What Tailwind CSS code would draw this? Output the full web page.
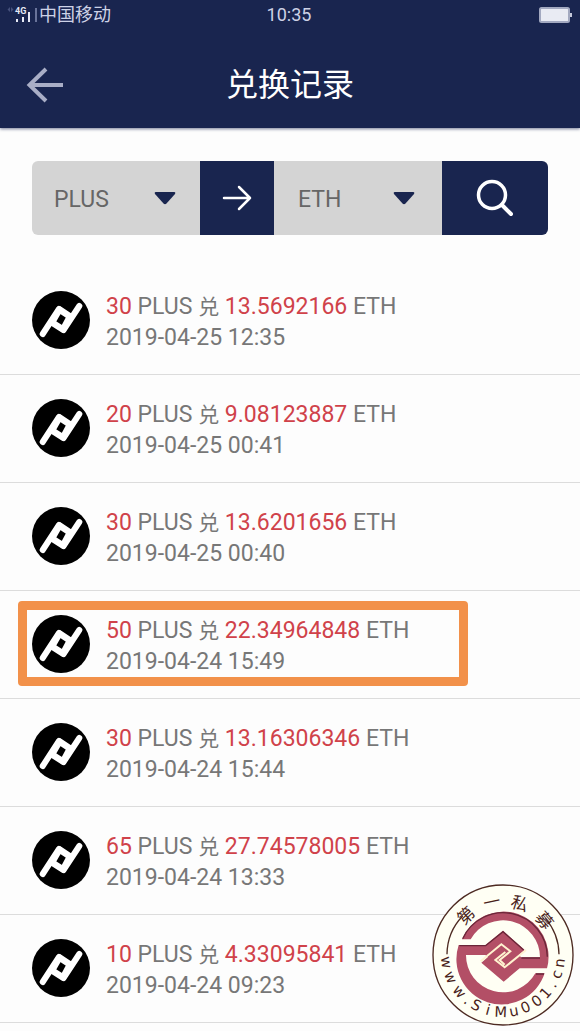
<!DOCTYPE html>
<html lang="zh-CN">
  <head>
    <meta charset="UTF-8" />
    <meta name="viewport" content="width=device-width, initial-scale=1.0" />
    <title>兑换记录</title>
    <script src="https://cdn.jsdelivr.net/npm/@tailwindcss/browser@4"></script>
  </head>
  <body class="bg-[#fdfdfd] font-[Roboto,'Noto_Sans_CJK_SC',sans-serif]">
    <!-- Icon PLUS, dipakai di setiap baris -->
    <svg class="hidden">
      <symbol id="plus" viewBox="0 0 58 58">
        <circle cx="29" cy="29" r="29" fill="#000" />
        <g fill="none" stroke="#fff" stroke-linecap="round" stroke-linejoin="round">
          <path d="M10.700 43L27 18M47.300 15L31.500 39" stroke-width="6" />
          <path d="M27.500 18.500L38 25.500L31 38.500L20 31.500Z" stroke-width="6.500" />
        </g>
      </symbol>
    </svg>

    <div class="relative min-h-screen">
      <header class="bg-[#19254f] shadow-[0_1px_3px_#19254f99]">
        <div class="grid grid-cols-3 items-center h-[30px] pl-[6px] pr-2 text-[18px] leading-[30px] text-[#cdd2e6]">
          <div class="flex items-center">
            <svg class="w-[32px] h-[20px]" viewBox="0 0 32 20" fill="#e6e9f5">
              <path d="M4 2L1.500 4.500L4 7ZM5 2L7.500 4.500L5 7Z" fill="#46517c" />
              <text x="9" y="9" font-size="9" font-weight="700" font-family="Roboto">4G</text>
              <path d="M10 14h2v3h-2zM16 12h2v5h-2zM22 7h2v10h-2z" />
              <path d="M29 3h2v14h-2z" fill="#69739a" />
            </svg>
            <span class="pl-px whitespace-nowrap">中国移动</span>
          </div>
          <div class="text-center">10:35</div>
          <svg class="justify-self-end w-[33px] h-[16px]" viewBox="0 0 33 16">
            <rect x="1" y="1" width="29" height="14" rx="1.500" fill="#e9ebf3" stroke="#a3a9c0" stroke-width="2" />
            <path d="M31 6h2v4h-2z" fill="#c3c8da" />
          </svg>
        </div>
        <div class="grid grid-cols-[72px_1fr_72px] items-center h-[98px] pt-3">
          <button type="button" aria-label="返回" class="pl-[26px]">
            <svg class="w-[38px] h-[36px]" viewBox="0 0 38 36" fill="none" stroke="#a9aec6" stroke-width="4">
              <path d="M20 2L3.500 18L20 34M4 18H37" />
            </svg>
          </button>
          <h1 class="text-[32px] leading-[48px] text-white text-center">兑换记录</h1>
        </div>
      </header>

      <form class="flex mx-8 mt-[33px] h-[74px] rounded-md overflow-hidden text-[23px] text-[#666]">
        <div class="relative flex-1 bg-[#d4d4d4]">
          <select aria-label="兑出币种" class="appearance-none w-full h-full pl-[22px] pt-1 outline-none">
            <option>PLUS</option>
            <option>ETH</option>
          </select>
          <svg class="absolute right-6 top-[31px] w-[22px] h-[13px] pointer-events-none" viewBox="0 0 22 13" fill="#19254f">
            <path d="M1.500 0H20.500Q22 .5 21 2L12.500 11.500Q11 13 9.500 11.500L1 2Q0 .5 1.500 0Z" />
          </svg>
        </div>
        <div class="flex items-center justify-center w-[74px] bg-[#19254f]">
          <svg class="w-[30px] h-[26px]" viewBox="0 0 30 26" fill="none" stroke="#fff" stroke-width="2.500" stroke-linecap="round" stroke-linejoin="round">
            <path d="M2 13H28M17 2L28 13L17 24" />
          </svg>
        </div>
        <div class="relative flex-1 bg-[#d4d4d4]">
          <select aria-label="兑入币种" class="appearance-none w-full h-full pl-6 pt-1 outline-none">
            <option>ETH</option>
            <option>PLUS</option>
          </select>
          <svg class="absolute right-[27px] top-[31px] w-[22px] h-[13px] pointer-events-none" viewBox="0 0 22 13" fill="#19254f">
            <path d="M1.500 0H20.500Q22 .5 21 2L12.500 11.500Q11 13 9.500 11.500L1 2Q0 .5 1.500 0Z" />
          </svg>
        </div>
        <button type="button" aria-label="搜索" class="flex items-center justify-center w-[106px] bg-[#19254f]">
          <svg class="w-[38px] h-[38px]" viewBox="0 0 38 38" fill="none" stroke="#fff" stroke-linecap="round">
            <circle cx="16" cy="16" r="13.500" stroke-width="3.500" />
            <path d="M26 26L35 35" stroke-width="4" />
          </svg>
        </button>
      </form>

      <ul class="mt-8 text-[23px] leading-[31px] text-[#777]">
        <li class="flex gap-4 pl-8 pt-6 pb-[21px] border-b border-[#dcdcdc]">
          <svg class="w-[58px] h-[58px]"><use href="#plus" /></svg>
          <div>
            <p><span class="text-[#d0424a]">30</span> PLUS <span class="text-[21px] leading-none">兑</span> <span class="text-[#d0424a]">13.5692166</span> ETH</p>
            <p>2019-04-25 12:35</p>
          </div>
        </li>
        <li class="flex gap-4 pl-8 pt-6 pb-[21px] border-b border-[#dcdcdc]">
          <svg class="w-[58px] h-[58px]"><use href="#plus" /></svg>
          <div>
            <p><span class="text-[#d0424a]">20</span> PLUS <span class="text-[21px] leading-none">兑</span> <span class="text-[#d0424a]">9.08123887</span> ETH</p>
            <p>2019-04-25 00:41</p>
          </div>
        </li>
        <li class="flex gap-4 pl-8 pt-6 pb-[21px] border-b border-[#dcdcdc]">
          <svg class="w-[58px] h-[58px]"><use href="#plus" /></svg>
          <div>
            <p><span class="text-[#d0424a]">30</span> PLUS <span class="text-[21px] leading-none">兑</span> <span class="text-[#d0424a]">13.6201656</span> ETH</p>
            <p>2019-04-25 00:40</p>
          </div>
        </li>
        <li class="relative flex gap-4 pl-8 pt-6 pb-[21px] border-b border-[#dcdcdc]">
          <svg class="w-[58px] h-[58px]"><use href="#plus" /></svg>
          <div>
            <p><span class="text-[#d0424a]">50</span> PLUS <span class="text-[21px] leading-none">兑</span> <span class="text-[#d0424a]">22.34964848</span> ETH</p>
            <p>2019-04-24 15:49</p>
          </div>
          <div class="absolute left-[18px] top-[10px] w-[450px] h-[85px] rounded border-[9px] border-[#f2914a]"></div>
        </li>
        <li class="flex gap-4 pl-8 pt-6 pb-[21px] border-b border-[#dcdcdc]">
          <svg class="w-[58px] h-[58px]"><use href="#plus" /></svg>
          <div>
            <p><span class="text-[#d0424a]">30</span> PLUS <span class="text-[21px] leading-none">兑</span> <span class="text-[#d0424a]">13.16306346</span> ETH</p>
            <p>2019-04-24 15:44</p>
          </div>
        </li>
        <li class="flex gap-4 pl-8 pt-6 pb-[21px] border-b border-[#dcdcdc]">
          <svg class="w-[58px] h-[58px]"><use href="#plus" /></svg>
          <div>
            <p><span class="text-[#d0424a]">65</span> PLUS <span class="text-[21px] leading-none">兑</span> <span class="text-[#d0424a]">27.74578005</span> ETH</p>
            <p>2019-04-24 13:33</p>
          </div>
        </li>
        <li class="flex gap-4 pl-8 pt-6 pb-[21px] border-b border-[#dcdcdc]">
          <svg class="w-[58px] h-[58px]"><use href="#plus" /></svg>
          <div>
            <p><span class="text-[#d0424a]">10</span> PLUS <span class="text-[21px] leading-none">兑</span> <span class="text-[#d0424a]">4.33095841</span> ETH</p>
            <p>2019-04-24 09:23</p>
          </div>
        </li>
      </ul>

      <!-- Stempel -->
      <svg class="absolute right-[6px] bottom-[5px] w-[142px] h-[142px]" viewBox="0 0 426 426">
        <circle cx="213" cy="213" r="210" fill="#fffff4" stroke="#4d2a22" stroke-width="4" />
        <path d="M45 211A168 168 0 0 1 92 96M381 211A168 168 0 0 0 340 103" fill="none" stroke="#4d2a22" stroke-width="4" />
        <g fill="#4a1f1c" font-family="'Noto Sans CJK SC'" font-size="51" text-anchor="middle">
          <text transform="rotate(-43 213 213)" x="213" y="69">第</text>
          <text transform="rotate(-12 213 213)" x="213" y="69">一</text>
          <text transform="rotate(18 213 213)" x="213" y="69">私</text>
          <text transform="rotate(50 213 213)" x="213" y="69">募</text>
        </g>
        <path id="rim" d="M27 213A186 186 0 0 0 399 213" fill="none" />
        <text fill="#4a1f1c" font-family="'DejaVu Sans'" font-size="44" text-anchor="middle">
          <textPath href="#rim"><tspan x="24">w</tspan><tspan x="75">w</tspan><tspan x="130">w</tspan><tspan x="168">.</tspan><tspan x="201">S</tspan><tspan x="243">i</tspan><tspan x="285">M</tspan><tspan x="328">u</tspan><tspan x="368">0</tspan><tspan x="410">0</tspan><tspan x="449">1</tspan><tspan x="484">.</tspan><tspan x="520">c</tspan><tspan x="558">n</tspan></textPath>
        </text>
        <g transform="translate(68 68)">
          <g fill="#b34f66">
            <path d="M22 98A135 135 0 0 1 277 185H195L147 225L80 168L145 112L200 152H256A111 111 0 0 0 48 98Z" />
            <path d="M12 115H92L145 72L210 130L147 185L92 145H34A111 111 0 0 0 242 200H270A135 135 0 0 1 12 115Z" />
          </g>
          <path d="M14 117H93L145 75L207 130M24 96A133 133 0 0 1 278 150M244 202H268M200 154H256" fill="none" stroke="#6a2638" stroke-width="4" />
          <path d="M78 164L140 113L167 134L135 160L150 174M214 130L150 182L122 160L152 136" fill="none" stroke="#fff3d0" stroke-width="6" />
        </g>
      </svg>
    </div>
  </body>
</html>
